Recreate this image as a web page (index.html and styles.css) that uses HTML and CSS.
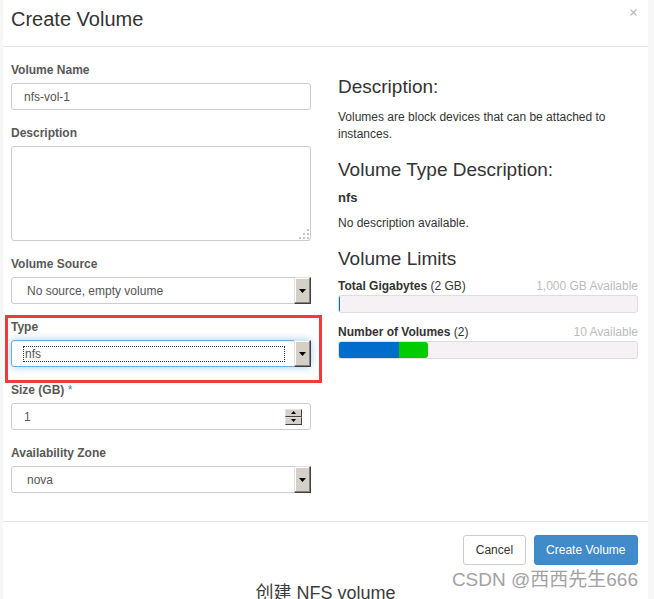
FILE: index.html
```html
<!DOCTYPE html>
<html>
<head>
<meta charset="utf-8">
<title>Create Volume</title>
<link rel="stylesheet" href="styles.css">
</head>
<body>
<div class="modal">
  <div class="modal-header">
    <h3 class="title">Create Volume</h3>
    <svg class="close" width="7" height="7" viewBox="0 0 7 7"><path d="M0.5 0.5L6.5 6.5M6.5 0.5L0.5 6.5" stroke="#b8b8b8" stroke-width="1.1" fill="none"/></svg>
  </div>
  <div class="modal-body">
    <div class="left">
      <div class="group">
        <div class="lbl">Volume Name</div>
        <div class="field"><span>nfs-vol-1</span></div>
      </div>
      <div class="group">
        <div class="lbl">Description</div>
        <div class="field textarea">
          <svg class="grip" width="10" height="10" viewBox="0 0 10 10">
            <rect x="8" y="0" width="2" height="2" fill="#c4c4c4"/>
            <rect x="8" y="4" width="2" height="2" fill="#c4c4c4"/>
            <rect x="4" y="4" width="2" height="2" fill="#c4c4c4"/>
            <rect x="8" y="8" width="2" height="2" fill="#c4c4c4"/>
            <rect x="4" y="8" width="2" height="2" fill="#c4c4c4"/>
            <rect x="0" y="8" width="2" height="2" fill="#c4c4c4"/>
          </svg>
        </div>
      </div>
      <div class="group">
        <div class="lbl">Volume Source</div>
        <div class="field select"><span>No source, empty volume</span>
          <div class="dd"><svg width="7" height="4" viewBox="0 0 7 4"><path d="M0 0H7L3.5 4Z" fill="#000"/></svg></div>
        </div>
      </div>
      <div class="group type-group">
        <div class="lbl">Type</div>
        <div class="field select focused"><span class="focus-ring">nfs</span>
          <div class="dd"><svg width="7" height="4" viewBox="0 0 7 4"><path d="M0 0H7L3.5 4Z" fill="#000"/></svg></div>
        </div>
        <div class="annot"></div>
      </div>
      <div class="group">
        <div class="lbl">Size (GB) <span class="req">*</span></div>
        <div class="field"><span>1</span>
          <div class="spin">
            <div class="sb"><svg width="5" height="3" viewBox="0 0 5 3"><path d="M0 3H5L2.5 0Z" fill="#000"/></svg></div>
            <div class="sb"><svg width="5" height="3" viewBox="0 0 5 3"><path d="M0 0H5L2.5 3Z" fill="#000"/></svg></div>
          </div>
        </div>
      </div>
      <div class="group">
        <div class="lbl">Availability Zone</div>
        <div class="field select"><span>nova</span>
          <div class="dd"><svg width="7" height="4" viewBox="0 0 7 4"><path d="M0 0H7L3.5 4Z" fill="#000"/></svg></div>
        </div>
      </div>
    </div>
    <div class="right">
      <h4 class="rh first">Description:</h4>
      <p class="rp intro">Volumes are block devices that can be attached to instances.</p>
      <h4 class="rh">Volume Type Description:</h4>
      <div class="type-name">nfs</div>
      <p class="rp nodesc">No description available.</p>
      <h4 class="rh limits">Volume Limits</h4>
      <div class="quota-head"><span><b>Total Gigabytes</b> (2 GB)</span><span class="avail">1,000 GB Available</span></div>
      <div class="bar"><div class="seg used thin" style="width:0.2%"></div></div>
      <div class="quota-head second"><span><b>Number of Volumes</b> (2)</span><span class="avail">10 Available</span></div>
      <div class="bar"><div class="seg used" style="width:20%"></div><div class="seg new" style="width:10%"></div></div>
    </div>
  </div>
  <div class="modal-footer">
    <div class="btn">Cancel</div>
    <div class="btn primary">Create Volume</div>
  </div>
  <div class="caption">创建 NFS volume</div>
  <div class="watermark">CSDN @西西先生666</div>
</div>
</body>
</html>
```

FILE: styles.css
```css
* { box-sizing: border-box; }

body {
  margin: 0;
  background: #f7f7f7;
  font-family: "Liberation Sans", Arial, "Noto Sans CJK SC", sans-serif;
  font-size: 12px;
  color: #333;
}

.modal {
  width: 645px;
  height: 599px;
  margin-left: 3px;
  background: #fff;
  position: relative;
  overflow: hidden;
}

.modal-header {
  height: 47px;
  border-bottom: 1px solid #e5e5e5;
  padding: 8px 11px 0 8px;
  display: flex;
  justify-content: space-between;
  align-items: flex-start;
}

.title {
  margin: 0;
  font-size: 20px;
  line-height: 22px;
  font-weight: normal;
  color: #333;
}

.close { display: block; margin-top: 1px; }

.modal-body {
  display: grid;
  grid-template-columns: 300px 300px;
  column-gap: 27px;
  padding: 15px 10px 13px 8px;
}

.group { margin-bottom: 15px; }

.lbl {
  font-weight: bold;
  line-height: 17px;
  margin-bottom: 4px;
  color: #585858;
}

.req { color: #3a87ad; font-weight: normal; }

.field {
  height: 27px;
  border: 1px solid #ccc;
  border-radius: 3px;
  display: flex;
  align-items: center;
  padding-left: 12px;
  color: #555;
  background: #fff;
}

.textarea {
  height: 95px;
  align-items: flex-end;
  justify-content: flex-end;
  padding: 0 1px 1px 0;
}

.grip { display: block; }

.select { padding-left: 15px; }

.dd {
  margin: -1px -1px -1px auto;
  align-self: stretch;
  width: 17px;
  background: #d4d0c8;
  border: 1px solid;
  border-color: #e4e2de #404040 #404040 #e4e2de;
  box-shadow: inset -1px -1px 0 #808080, inset 1px 1px 0 #fff;
  display: flex;
  align-items: center;
  justify-content: center;
}

.dd svg { display: block; }

.focused {
  border-color: #66afe9;
  box-shadow: 0 0 8px rgba(102, 175, 233, 0.6), inset 0 1px 1px rgba(0, 0, 0, 0.075);
  padding-left: 11px;
}

.focus-ring {
  flex: 1;
  height: 16px;
  line-height: 14px;
  border: 1px dotted #333;
  padding-left: 1px;
  margin-right: 9px;
  color: #555;
}

.type-group { position: relative; }

.annot {
  position: absolute;
  left: -6px;
  top: -4px;
  width: 317px;
  height: 68px;
  border: 3px solid #ef3b3b;
  pointer-events: none;
}

.spin {
  margin-left: auto;
  margin-right: 8px;
  width: 17px;
  display: flex;
  flex-direction: column;
}

.sb {
  height: 8px;
  background: #d4d0c8;
  border: 1px solid;
  border-color: #e4e2de #404040 #404040 #e4e2de;
  display: flex;
  align-items: center;
  justify-content: center;
}

.sb svg { display: block; }

/* right column */
.rh {
  margin: 14px 0 12px;
  font-size: 19px;
  line-height: 21px;
  font-weight: normal;
  color: #333;
}

.rp {
  margin: 0 0 15px;
  line-height: 17px;
  color: #333;
}

.rp.intro { margin-bottom: 16px; }

.type-name {
  margin-top: -3px;
  font-weight: bold;
  font-size: 13px;
  line-height: 18px;
  margin-bottom: 8px;
}

.nodesc { margin-bottom: 16px; }

.limits { margin: 0 0 9px; }

.quota-head {
  display: flex;
  justify-content: space-between;
  line-height: 17px;
  margin-bottom: 0;
}

.quota-head.second { margin-top: 11px; }

.avail { color: #bbb; }

.bar {
  height: 18px;
  background: #f5f1f5;
  border: 1px solid #e0dce0;
  border-radius: 3px;
  display: flex;
  overflow: hidden;
}

.seg { height: 100%; }
.used { background: #006dcc; }
.new { background: #00cc00; border-radius: 0 3px 3px 0; }
.thin { min-width: 1px; }

.modal-footer {
  border-top: 1px solid #e5e5e5;
  padding: 13px 10px 0;
  display: flex;
  justify-content: flex-end;
  gap: 8px;
}

.btn {
  height: 30px;
  line-height: 28px;
  padding: 0 11.5px;
  border: 1px solid #ccc;
  border-radius: 3px;
  background: #fff;
  color: #333;
}

.btn.primary {
  background: #428bca;
  border-color: #3f86c4;
  color: #fff;
}

.caption {
  margin-top: 16px;
  text-align: center;
  font-size: 18px;
  line-height: 24px;
  color: #3b3b3b;
}

.watermark {
  position: absolute;
  right: 10px;
  top: 570px;
  font-size: 19px;
  line-height: 19px;
  color: #a3a3a3;
}
```
